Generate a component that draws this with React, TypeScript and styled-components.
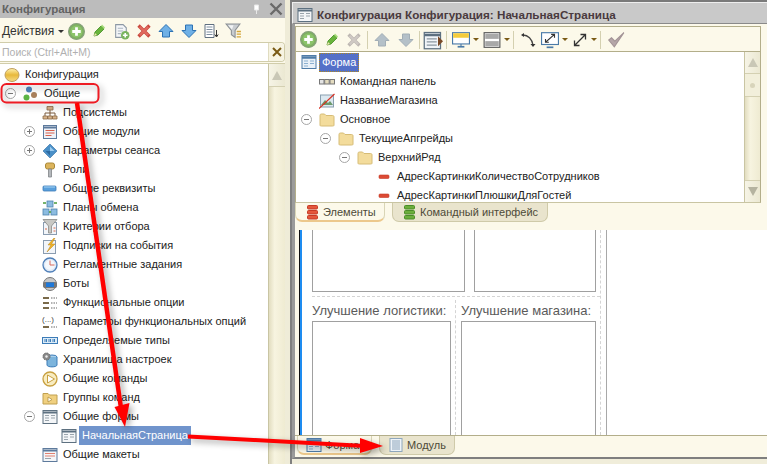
import React from "react";
import styled, { createGlobalStyle } from "styled-components";

const Global = createGlobalStyle`
  html, body { margin: 0; padding: 0; overflow: hidden; background: #fff; }
  body { font-family: "Liberation Sans", Arial, sans-serif; font-size: 12px; color: #222; }
`;

const Page = styled.div`
  position: relative; width: 767px; height: 464px; display: flex; overflow: hidden; background: #f0edda;
`;
const LeftPanel = styled.div`
  width: 285px; height: 464px; display: flex; flex-direction: column; background: #fcf9ea; flex: none;
`;
const PanelTitle = styled.div`
  height: 18px; flex: none; background: #bcbcbc; display: flex; align-items: center; padding-left: 2px;
  font-weight: bold; font-size: 11.5px; color: #636363;
`;
const TitleSpacer = styled.div`flex: 1;`;
const TitleButton = styled.span`
  width: 19px; height: 18px; display: flex; align-items: center; justify-content: center;
`;
const PanelToolbar = styled.div`
  height: 25px; flex: none; display: flex; align-items: center; padding: 1px 0 0 2px; box-sizing: border-box; font-size: 12px; color: #333;
`;
const ActionsMenu = styled.span`display: flex; align-items: center; width: 63px; gap: 4px; letter-spacing: -0.05px;`;
const Caret = styled.span`
  width: 0; height: 0; border-left: 3px solid transparent; border-right: 3px solid transparent;
  border-top: 3px solid ${p => p.$color || "#333"}; flex: none;
`;
const ToolBtn = styled.span`
  width: ${p => p.$w || 22.5}px; height: 22px; display: flex; align-items: center; justify-content: center; gap: 3px; flex: none;
`;
const SearchBox = styled.div`
  height: 18px; flex: none; margin-bottom: 1px; display: flex; align-items: stretch; background: #fff;
  border: 1px solid #d1cdaa; border-left: none; border-radius: 0 4px 4px 0; box-sizing: content-box;
  margin-top: -1px;
`;
const SearchText = styled.span`
  flex: 1; color: #b0b0b0; font-size: 10.5px; line-height: 18px; padding-left: 2px;
`;
const SearchClear = styled.span`
  width: 15px; background: #f7f4e2; border-left: 1px solid #e0dcc0; display: flex; align-items: center; justify-content: center;
  border-radius: 0 4px 4px 0;
`;
const TreeArea = styled.div`
  flex: 1; min-height: 0; display: flex; background: #fff; border-top: 1px solid #d1cdaa;
`;
const Tree = styled.div`
  flex: 1; min-width: 0; overflow: hidden; background: #fff; padding-top: ${p => p.$top || 0}px;
`;
const Row = styled.div`
  height: ${p => p.$h || 19}px; display: flex; align-items: center; padding-left: ${p => p.$indent}px; white-space: nowrap;
  font-size: 11px; color: #222;
`;
const Slot = styled.span`width: 19px; height: 16px; flex: none; display: flex; align-items: center; justify-content: flex-start;`;
const Expander = styled.span`
  width: 9px; height: 9px; border: 1px solid #a6a6a6; border-radius: 50%; position: relative; display: block;
  background: #fff; margin-left: 1px;
  &::before { content: ""; position: absolute; left: 2px; right: 2px; top: 4px; height: 1px; background: #777; }
  &::after { content: ""; position: absolute; top: 2px; bottom: 2px; left: 4px; width: 1px; background: #777; display: ${p => p.$plus ? "block" : "none"}; }
`;
const Label = styled.span`
  margin-left: 2px; padding: 0 3px; line-height: 19px; height: 19px;
  background: ${p => p.$sel === "blue" ? "#7094cc" : p.$sel === "focus" ? "#5470c8" : "transparent"};
  color: ${p => p.$sel ? "#fff" : "#222"};
  outline: ${p => p.$sel === "focus" ? "1px dotted #b08a20" : "none"}; outline-offset: -1px;
`;
const Scrollbar = styled.div`
  width: ${p => p.$w || 17}px; flex: none; display: flex; flex-direction: column;
  background: linear-gradient(90deg, #e2ddc0, #f7f4e0 35%, #efebd2);
  border-left: 1px solid #c9c5a3; box-sizing: border-box;
`;
const ScrollEnd = styled.div`
  height: ${p => p.$h || 21}px; flex: none; display: flex; align-items: center; justify-content: center;
  background: linear-gradient(90deg, #f6f4e6, #ebe8d2);
  border-bottom: ${p => p.$bottom ? "none" : "1px solid #d4d0b2"};
  border-top: ${p => p.$bottom ? "1px solid #d4d0b2" : "none"};
`;
const ScrollThumb = styled.div`
  height: 22px; flex: none; background: #f2efdb; border-bottom: 1px solid #d4d0b2; display: flex; align-items: center; justify-content: center;
  &::after { content: ""; width: 5px; height: 5px; border-radius: 50%; background: #d8d4bb; }
`;
const ScrollFill = styled.div`flex: 1;`;
const Tri = styled.span`
  width: 0; height: 0; border-left: 5px solid transparent; border-right: 5px solid transparent;
  ${p => p.$down ? "border-top: 9px solid #b5b3a0;" : "border-bottom: 9px solid #c9c7b6;"}
`;

const Gutter = styled.div`width: 5px; flex: none; background: #efecd8;`;

const Window = styled.div`
  flex: 1; min-width: 0; height: 464px; display: flex; flex-direction: column;
  border-left: 2px solid #808080; border-top: 2px solid #7a7a7a; box-sizing: border-box; background: #f0edda;
`;
const WinTitle = styled.div`
  height: 22px; flex: none; background: #c9c9c9; border-top: 1px solid #eee; border-left: 1px solid #eee;
  border-bottom: 1px solid #8a8a8a; display: flex; align-items: center; padding: 3px 0 0 4px; gap: 4px; box-sizing: border-box;
  font-weight: bold; font-size: 11.7px; color: #4a3a3e;
`;
const WinBody = styled.div`
  flex: 1; min-height: 0; display: flex; flex-direction: column; background: #fcf9ea;
  border-left: 3px solid #9b9b9b; border-bottom: 2px solid #7f7f7f; margin-bottom: 5px;
`;
const EditorTop = styled.div`
  height: 206px; flex: none; padding-top: 2px; padding-right: 6px; box-sizing: border-box; display: flex; flex-direction: column;
`;
const EditorFrame = styled.div`
  height: 177px; flex: none; display: flex; flex-direction: column; border: 1px solid #b3ae8a; border-bottom: 1px solid #c9c5a3;
  box-sizing: border-box; background: #fcf9ea;
`;
const EditorToolbar = styled.div`
  height: 25px; flex: none; display: flex; align-items: center; border-bottom: 1px solid #b3ae8a; padding: 1px 0 0 1px; box-sizing: border-box;
`;
const ToolSep = styled.span`width: 1px; height: 18px; background: #d4d0b0; flex: none; margin: 0 ${p => p.$m ?? 2}px;`;
const EditorTreeRow = styled.div`flex: 1; min-height: 0; display: flex; background: #fff;`;
const TabRow = styled.div`
  height: 20px; flex: none; display: flex; align-items: flex-start; gap: 7px;
`;
const Tab = styled.div`
  height: 19px; display: flex; align-items: center; gap: ${p => p.$gap ?? 2}px; padding: 0 0 0 ${p => p.$pl ?? 9}px; box-sizing: border-box; width: ${p => p.$w}px;
  font-size: 11px; color: #4d4a38; white-space: nowrap;
  border: 1px solid ${p => p.$active ? "#d9d5b6" : "#cfcaa9"}; border-top: none; border-radius: 0 0 7px 7px;
  background: ${p => p.$active ? "#fcf9ea" : "#e9e4cd"};
  ${p => p.$active ? "border-bottom: 2px solid #ecc88c;" : ""}
`;
const Canvas = styled.div`
  flex: 1; min-height: 0; margin-left: 4px; background: #fff; display: flex; overflow: hidden;
  border-left: 1px solid #111;
`;
const BlueEdge = styled.div`width: 2px; flex: none; background: #1e8cf0;`;
const FormArea = styled.div`
  width: 305px; flex: none; padding-left: 10px; box-sizing: border-box; border-right: 1px solid #a8a8a8;
`;
const FormInner = styled.div`
  width: 289px; height: 100%; box-sizing: border-box; border-right: 1px dashed #d4d4d4; display: flex; flex-direction: column;
`;
const TopBoxes = styled.div`height: 62px; flex: none; display: flex; gap: 9px;`;
const PicBox = styled.div`
  box-sizing: border-box; width: ${p => p.$w}px; border: 1px solid #a0a0a0;
  ${p => p.$top ? "border-top: none; height: 100%;" : "border-bottom: none; flex: 1; min-height: 0;"}
`;
const HDash = styled.div`
  width: 288px; flex: none; border-top: 1px dashed #d4d4d4; margin-top: 4px; box-sizing: border-box;
`;
const BottomRow = styled.div`flex: 1; min-height: 0; display: flex; padding-top: 3px;`;
const Col = styled.div`
  display: flex; flex-direction: column; width: ${p => p.$w}px; flex: none; box-sizing: border-box;
  ${p => p.$divider ? "border-right: 1px dashed #d4d4d4; margin-right: 5px;" : ""}
`;
const FieldLabel = styled.div`
  height: 21px; flex: none; line-height: 21px; font-size: 13px; color: #5a5a5a; white-space: nowrap;
`;
const ModeTabs = styled.div`
  height: 21px; flex: none; border-top: 1px solid #b3ae8a; display: flex; gap: 7px; padding-left: 2px; box-sizing: content-box;
`;
const Overlay = styled.svg`
  position: absolute; left: 0; top: 0; width: 767px; height: 464px; pointer-events: none; overflow: visible;
`;

/* ---- icons ---- */
const I = ({ children, s = 16 }: any) => <svg width={s} height={s} viewBox="0 0 16 16" style={{ flex: "none", display: "block" }}>{children}</svg>;

const Plus = () => <I s={17}><circle cx="8" cy="8" r="7.5" fill="#7faf62" stroke="#87a07c" /><circle cx="8" cy="8" r="5.6" fill="#8cc46a" /><path d="M8 4v8M4 8h8" stroke="#fff" strokeWidth="2.6" /></I>;
const Pencil = () => <I><path d="M3 13l1-4 6-6 3 3-6 6z" fill="#69b43c" stroke="#3f8a1f" strokeWidth=".8" /><path d="M3 13l1-3 2 2z" fill="#f0e6b0" /><path d="M10 3l3 3 1-1.500-3-3z" fill="#a8dc7c" /></I>;
const DocPlus = () => <I s={17}><path d="M2.500 1.500h7l3 3v9h-10z" fill="#f4f6f8" stroke="#8c98a4" /><path d="M4.500 5h5M4.500 7.500h5M4.500 10h3" stroke="#a9b4c0" /><circle cx="11.500" cy="11.500" r="4" fill="#79b35e" /><path d="M11.500 9.300v4.400M9.300 11.500h4.400" stroke="#fff" strokeWidth="1.500" /></I>;
const XIcon = ({ c = "#e06a5e", d = "#c9483e" }: any) => <I><path d="M3 3l10 10M13 3L3 13" stroke={d} strokeWidth="4" strokeLinecap="square" transform="translate(8 8) scale(.85) translate(-8 -8)" /><path d="M3 3l10 10M13 3L3 13" stroke={c} strokeWidth="2.500" transform="translate(8 8) scale(.85) translate(-8 -8)" /></I>;
const Up = ({ c = "#6fb0e6", e = "#2c72b4" }: any) => <I><path d="M8 1.500L15 8.500h-3.500V14h-7V8.500H1z" fill={c} stroke={e} /></I>;
const Down = ({ c = "#6fb0e6", e = "#2c72b4" }: any) => <I><path d="M8 14.500L15 7.500h-3.500V2h-7v5.500H1z" fill={c} stroke={e} /></I>;
const ListDown = () => <I><path d="M2 1.500h9v13H2z" fill="#fff" stroke="#5f6f80" /><path d="M3.500 4h6M3.500 6.500h6M3.500 9h6M3.500 11.500h6" stroke="#7f8fa0" /><path d="M13.500 7v6.500M11.800 11.500l1.700 2.500 1.700-2.500" stroke="#333" fill="none" /></I>;
const Funnel = () => <I s={17}><path d="M1 1h13L9.500 7v6.500L6 11V7z" fill="#c8ccd0" stroke="#8a8f94" /><path d="M3 2h5L6.500 6z" fill="#f2f4f6" /><path d="M11 8h4M11 10.500h4M11 13h4" stroke="#d4a63a" strokeWidth="1.200" /></I>;
const Pin = () => <svg width="7" height="11" viewBox="0 0 7 11"><path d="M1.500 1h4v5h-4zM3.500 6v4" fill="#fff" stroke="#e8e8e8" /></svg>;
const CloseBig = () => <svg width="14" height="14" viewBox="0 0 14 14"><path d="M1.500 1.500l11 11M12.500 1.500l-11 11" stroke="#6a6a6a" strokeWidth="2.400" /></svg>;
const SmallX = () => <svg width="10" height="10" viewBox="0 0 10 10"><path d="M1 1l8 8M9 1L1 9" stroke="#7a5a14" strokeWidth="2" /></svg>;

const ConfigBall = () => <I><defs><linearGradient id="cb" x1="0" y1="0" x2="0" y2="1"><stop offset="0" stopColor="#fff2b0" /><stop offset=".5" stopColor="#e8b83a" /><stop offset="1" stopColor="#f6dc88" /></linearGradient></defs><ellipse cx="8" cy="8" rx="7" ry="6.500" fill="url(#cb)" stroke="#c0a060" /></I>;
const Common = () => <I><circle cx="6" cy="3.500" r="3" fill="#4f84bc" /><circle cx="3.500" cy="11.500" r="3" fill="#5cb544" /><circle cx="11" cy="9" r="3" fill="#a9805c" /></I>;
const Subsys = () => <I><path d="M8 5v3M3 11V8h10v3M8 8v3" stroke="#7a5a3c" fill="none" /><path d="M5 1.500h6v3.500H5zM1 11h4.500v3H1zM5.800 11h4.400v3H5.800zM10.500 11H15v3h-4.500z" fill="#d8b48c" stroke="#8c6a48" strokeWidth=".8" /></I>;
const Module = () => <I><rect x="1.500" y="1.500" width="13" height="13" fill="#eef2f8" stroke="#5d7a9c" /><path d="M1.500 3.500h13" stroke="#5d7a9c" strokeWidth="2" /><path d="M3.500 6.500h9M3.500 9h9M3.500 11.500h6" stroke="#d8604c" /></I>;
const Diamond = () => <I><path d="M8 1l7 7-7 7-7-7z" fill="#4a90c8" stroke="#2f6ca0" strokeWidth=".6" /><path d="M8 3.500L12.500 8 8 8z" fill="#9ccbee" /><path d="M8 12.500L3.500 8 8 8z" fill="#2c6aa2" /></I>;
const Key = () => <I><rect x="3.500" y="1" width="9" height="6" rx="2" fill="#dcb45c" stroke="#a98838" /><path d="M6.500 7h3v8h-3z" fill="#b4b8bc" stroke="#808488" strokeWidth=".8" /></I>;
const Attr = () => <I><rect x="1" y="5" width="13" height="5" rx="1" fill="#5aa0dc" stroke="#3c7cb8" strokeWidth=".8" /><path d="M2 6h11" stroke="#a8d4f4" /></I>;
const Exchange = () => <I><rect x="5" y="1" width="6" height="6" fill="#8cbce0" stroke="#4f83ad" strokeWidth=".8" /><rect x="1" y="9" width="6" height="6" fill="#8cbce0" stroke="#4f83ad" strokeWidth=".8" /><rect x="9" y="9" width="6" height="6" fill="#8cbce0" stroke="#4f83ad" strokeWidth=".8" /><path d="M1 3h3M12 3h3M7 12h2" stroke="#4a9a3a" strokeWidth="1.400" /></I>;
const Criteria = () => <I><rect x="1.500" y="3.500" width="13" height="12" fill="#f2f5f9" stroke="#8a9cb0" /><path d="M1 .5h14L9.500 7v7h-3V7z" fill="#c8c8c4" stroke="#8a8a86" strokeWidth=".8" /><path d="M3 10h2M11.500 9h2M11.500 12h2" stroke="#d86a4c" /></I>;
const Bolt = () => <I><rect x="1.500" y="2.500" width="12" height="13" fill="#f2f5f9" stroke="#8a9cb0" /><path d="M12 0L6 7h3l-4 7 8-8H9.500l3.500-6z" fill="#f0b428" stroke="#b8841c" strokeWidth=".5" /></I>;
const Clock = () => <I><circle cx="8" cy="8" r="7" fill="#dce8f6" stroke="#4f7fb8" strokeWidth="1.300" /><circle cx="8" cy="8" r="5" fill="#f4f8fc" /><path d="M8 3.500V8h4.500" stroke="#d86a5c" fill="none" /></I>;
const Bot = () => <I><circle cx="8" cy="8" r="6.500" fill="#c8c8c8" stroke="#777" /><rect x="1" y="6" width="14" height="6" rx="2" fill="#777" /><rect x="4" y="6.500" width="8" height="4.500" fill="#1e78d8" /></I>;
const Options = () => <I><path d="M1 3h6M1 8h6M1 13h6" stroke="#7a6a4a" strokeWidth="2" /><path d="M9 3h6M9 8h6M9 13h6" stroke="#9a9a9a" strokeWidth="1.500" strokeDasharray="1.500 1" /></I>;
const OptParams = () => <svg width="16" height="16" viewBox="0 0 16 16" style={{ flex: "none" }}><text x="0" y="8" fontSize="8" fontFamily="Liberation Sans" fill="#444">(...)</text><path d="M1 13h6" stroke="#7a6a4a" strokeWidth="2" /><path d="M9 13h6" stroke="#9a9a9a" strokeWidth="1.500" strokeDasharray="1.500 1" /></svg>;
const Types = () => <I><rect x="0.500" y="4.500" width="15" height="6" fill="#dcecf8" stroke="#3c7cb8" /><path d="M3 6v3M4.500 6v3M7 6v3M8.500 6v3M11 6v3M12.500 6v3" stroke="#3c7cb8" /></I>;
const Storage = () => <I><ellipse cx="10" cy="5" rx="5" ry="2" fill="#a8d0ec" stroke="#3c7cb8" /><path d="M5 5v8c0 2.500 10 2.500 10 0V5" fill="#7cb4dc" stroke="#3c7cb8" /><circle cx="4.500" cy="4.500" r="3.500" fill="#8a8a8a" stroke="#666" strokeDasharray="1.500 .8" /><circle cx="4.500" cy="4.500" r="1.200" fill="#eee" /></I>;
const PlayCircle = () => <I><circle cx="8" cy="8" r="7" fill="#f8ecc0" stroke="#c8a040" strokeWidth="1.300" /><path d="M5.500 4l7 4-7 4z" fill="#fff" stroke="#c8a040" /></I>;
const PlayFolder = () => <I><path d="M1 3.500h5l1.500 1.500h7.500v9H1z" fill="#f0d080" stroke="#c0a050" /><path d="M6 7l4 2.500L6 12z" fill="#fff" stroke="#b09040" strokeWidth=".8" /></I>;
const FormDoc = () => <I><rect x="1" y="1.500" width="14" height="13" fill="#f4f6f8" stroke="#5d7080" /><path d="M1 3.500h14" stroke="#5d7080" strokeWidth="2" /><path d="M3 6.500h4M3 9h4M3 11.500h4M9 6.500h4M9 9h4" stroke="#9aa4ac" /></I>;
const ModuleDoc = () => <I><rect x="2" y="1.500" width="12" height="13" fill="#eef3f8" stroke="#8ea6bc" /><path d="M4 4h8M4 6h8M4 8h8M4 10h8M4 12h8" stroke="#8ea6bc" /></I>;
const Layouts = () => <I><rect x="1" y="1.500" width="14" height="13" fill="#f4f6f8" stroke="#5d7a9c" /><path d="M1 3.500h14" stroke="#5d7a9c" strokeWidth="2" /><path d="M3 6.500h10M3 9h10" stroke="#e08070" /><path d="M3 11.500h6" stroke="#9aa4ac" /></I>;
const FormMain = () => <I><rect x="1" y="1.500" width="14" height="13" fill="#e8f0f8" stroke="#4f7ca8" /><path d="M1 3.500h14" stroke="#4f7ca8" strokeWidth="2.500" /><path d="M3 7h4M3 9.500h4M3 12h4M9 7h4M9 9.500h4" stroke="#8cb0d0" /></I>;
const CmdPanel = () => <I><rect x="0.500" y="5.500" width="4.500" height="4.500" fill="#e4e4e4" stroke="#777" /><rect x="5.700" y="5.500" width="4.500" height="4.500" fill="#e4dcc0" stroke="#777" /><rect x="11" y="5.500" width="4.500" height="4.500" fill="#e4dcc0" stroke="#777" /></I>;
const NoPic = () => <I><rect x="1.500" y="2" width="13" height="12" fill="#dce8f0" stroke="#8aa0b0" /><path d="M2 12l4-5 3 3 2-2 3 4z" fill="#6c9a6c" /><path d="M0 15.500L15.500 1" stroke="#d83020" strokeWidth="1.100" /></I>;
const Folder = () => <I><path d="M1 3.500c0-1 .5-1.500 1.500-1.500h3l1.500 1.500h6.500c1 0 1.500.5 1.500 1.500v8c0 1-.5 1-1.500 1h-11C1.500 14 1 14 1 13z" fill="#f3dc9c" stroke="#d6bc76" /></I>;
const RedDash = () => <I><rect x="3" y="6" width="10" height="3.500" rx="1" fill="#dc4a34" stroke="#c63a26" strokeWidth=".6" /></I>;
const Stack = ({ c, e }: any) => <I><rect x="2.500" y="1.500" width="10" height="3.500" rx="1" fill={c} stroke={e} /><rect x="2.500" y="6.500" width="10" height="3.500" rx="1" fill={c} stroke={e} /><rect x="2.500" y="11.500" width="10" height="3.500" rx="1" fill={c} stroke={e} /></I>;
const RunForm = () => <I s={20}><rect x="1" y="2" width="13" height="13" fill="#f0f4f8" stroke="#5d7080" /><path d="M1 4h13" stroke="#5d7080" strokeWidth="2" /><path d="M3 7h8M3 9.500h8M3 12h8" stroke="#8a96a0" /><path d="M12 5l4 4-4 4z" fill="#7a4a28" /></I>;
const Display = () => <I s={18}><rect x="0.500" y="1.500" width="15" height="10" fill="#fff" stroke="#4a7aa8" /><rect x="1" y="2" width="14" height="4" fill="#f4cc3c" /><path d="M5 14h6" stroke="#4a7aa8" strokeWidth="1.500" /><path d="M8 11.500V14" stroke="#4a7aa8" /></I>;
const Split = () => <I s={18}><rect x="1" y="1.500" width="14" height="13" fill="#fff" stroke="#555" /><rect x="2" y="2.500" width="12" height="4.500" fill="#a8a8a8" /><rect x="2" y="9" width="12" height="4.500" fill="#a8a8a8" /></I>;
const Swap = () => <I><path d="M3 3c5 0 9 4 10 10" fill="none" stroke="#444" strokeWidth="1.300" /><path d="M1 3l3-2v4zM13 15l-2.500-3h5z" fill="#333" /></I>;
const Resize = () => <I s={18}><rect x="0.500" y="1.500" width="15" height="10.500" fill="#fff" stroke="#4a7aa8" /><path d="M5 14.500h6" stroke="#4a7aa8" strokeWidth="1.500" /><path d="M4 10l8-7M9 3h3v3M7 10H4V7" stroke="#333" fill="none" /></I>;
const Expand = () => <I><path d="M2.500 13.500l11-11M8.500 2.500h5v5M7.500 13.500h-5v-5" stroke="#333" strokeWidth="1.300" fill="none" /></I>;
const Check = () => <I s={18}><path d="M1.500 8l5 6L15 1.500 7 9 4 6z" fill="#b5a6a8" stroke="#a39496" /></I>;

const leftRows: any[] = [
  { indent: 4, icon: <ConfigBall />, text: "Конфигурация", noSlot: true },
  { indent: 4, icon: <Common />, text: "Общие", exp: "minus" },
  { indent: 23, icon: <Subsys />, text: "Подсистемы" },
  { indent: 23, icon: <Module />, text: "Общие модули", exp: "plus" },
  { indent: 23, icon: <Diamond />, text: "Параметры сеанса", exp: "plus" },
  { indent: 23, icon: <Key />, text: "Роли" },
  { indent: 23, icon: <Attr />, text: "Общие реквизиты" },
  { indent: 23, icon: <Exchange />, text: "Планы обмена" },
  { indent: 23, icon: <Criteria />, text: "Критерии отбора" },
  { indent: 23, icon: <Bolt />, text: "Подписки на события" },
  { indent: 23, icon: <Clock />, text: "Регламентные задания" },
  { indent: 23, icon: <Bot />, text: "Боты" },
  { indent: 23, icon: <Options />, text: "Функциональные опции" },
  { indent: 23, icon: <OptParams />, text: "Параметры функциональных опций" },
  { indent: 23, icon: <Types />, text: "Определяемые типы" },
  { indent: 23, icon: <Storage />, text: "Хранилища настроек" },
  { indent: 23, icon: <PlayCircle />, text: "Общие команды" },
  { indent: 23, icon: <PlayFolder />, text: "Группы команд" },
  { indent: 23, icon: <FormDoc />, text: "Общие формы", exp: "minus" },
  { indent: 42, icon: <FormDoc />, text: "НачальнаяСтраница", sel: "blue" },
  { indent: 23, icon: <Layouts />, text: "Общие макеты" },
];
const rightRows: any[] = [
  { indent: 5, icon: <FormMain />, text: "Форма", noSlot: true, sel: "focus", h: 20 },
  { indent: 4, icon: <CmdPanel />, text: "Командная панель" },
  { indent: 4, icon: <NoPic />, text: "НазваниеМагазина" },
  { indent: 4, icon: <Folder />, text: "Основное", exp: "minus" },
  { indent: 23, icon: <Folder />, text: "ТекущиеАпгрейды", exp: "minus" },
  { indent: 42, icon: <Folder />, text: "ВерхнийРяд", exp: "minus" },
  { indent: 61, icon: <RedDash />, text: "АдресКартинкиКоличествоСотрудников" },
  { indent: 61, icon: <RedDash />, text: "АдресКартинкиПлюшкиДляГостей" },
];

const TreeRows = ({ rows }: { rows: any[] }) => (
  <>
    {rows.map((r, i) => (
      <Row key={i} $indent={r.indent} $h={r.h}>
        {!r.noSlot && <Slot>{r.exp && <Expander $plus={r.exp === "plus"} />}</Slot>}
        {r.icon}
        <Label $sel={r.sel}>{r.text}</Label>
      </Row>
    ))}
  </>
);

export default function App() {
  return (
    <Page>
      <Global />
      <LeftPanel>
        <PanelTitle>
          Конфигурация
          <TitleSpacer />
          <TitleButton><Pin /></TitleButton>
          <TitleButton><CloseBig /></TitleButton>
        </PanelTitle>
        <PanelToolbar>
          <ActionsMenu>Действия <Caret /></ActionsMenu>
          <ToolBtn><Plus /></ToolBtn>
          <ToolBtn><Pencil /></ToolBtn>
          <ToolBtn><DocPlus /></ToolBtn>
          <ToolBtn><XIcon /></ToolBtn>
          <ToolBtn><Up /></ToolBtn>
          <ToolBtn><Down /></ToolBtn>
          <ToolBtn><ListDown /></ToolBtn>
          <ToolBtn><Funnel /></ToolBtn>
        </PanelToolbar>
        <SearchBox>
          <SearchText>Поиск (Ctrl+Alt+M)</SearchText>
          <SearchClear><SmallX /></SearchClear>
        </SearchBox>
        <TreeArea>
          <Tree $top={1}><TreeRows rows={leftRows} /></Tree>
          <Scrollbar>
            <ScrollEnd $h={22}><Tri /></ScrollEnd>
            <ScrollFill />
          </Scrollbar>
        </TreeArea>
      </LeftPanel>
      <Gutter />
      <Window>
        <WinTitle><FormDoc />Конфигурация Конфигурация: НачальнаяСтраница</WinTitle>
        <WinBody>
          <EditorTop>
            <EditorFrame>
              <EditorToolbar>
                <ToolBtn $w={23}><Plus /></ToolBtn>
                <ToolBtn $w={23}><Pencil /></ToolBtn>
                <ToolBtn $w={22}><XIcon c="#cfc9c4" d="#bdb7b2" /></ToolBtn>
                <ToolSep $m={2} />
                <ToolBtn $w={24}><Up c="#b4c0c8" e="#a2aeb6" /></ToolBtn>
                <ToolBtn $w={23}><Down c="#b4c0c8" e="#a2aeb6" /></ToolBtn>
                <ToolSep $m={2} />
                <ToolBtn $w={21}><RunForm /></ToolBtn>
                <ToolSep $m={3} />
                <ToolBtn $w={31}><Display /><Caret $color="#7a5a14" /></ToolBtn>
                <ToolBtn $w={30}><Split /><Caret $color="#7a5a14" /></ToolBtn>
                <ToolSep $m={2} />
                <ToolBtn $w={23}><Swap /></ToolBtn>
                <ToolBtn $w={31}><Resize /><Caret $color="#7a5a14" /></ToolBtn>
                <ToolBtn $w={29}><Expand /><Caret $color="#7a5a14" /></ToolBtn>
                <ToolSep $m={1} />
                <ToolBtn $w={28}><Check /></ToolBtn>
              </EditorToolbar>
              <EditorTreeRow>
                <Tree><TreeRows rows={rightRows} /></Tree>
                <Scrollbar $w={16}>
                  <ScrollEnd $h={21}><Tri /></ScrollEnd>
                  <ScrollThumb />
                  <ScrollFill />
                  <ScrollEnd $h={21} $bottom><Tri $down /></ScrollEnd>
                </Scrollbar>
              </EditorTreeRow>
            </EditorFrame>
            <TabRow>
              <Tab $active $w={90}><Stack c="#e4573c" e="#c63a26" />Элементы</Tab>
              <Tab $w={156}><Stack c="#6cae3c" e="#4a8c28" />Командный интерфейс</Tab>
            </TabRow>
          </EditorTop>
          <Canvas>
            <BlueEdge />
            <FormArea>
              <FormInner>
                <TopBoxes>
                  <PicBox $top $w={153} />
                  <PicBox $top $w={122} />
                </TopBoxes>
                <HDash />
                <BottomRow>
                  <Col $w={144} $divider>
                    <FieldLabel>Улучшение логистики:</FieldLabel>
                    <PicBox $w={139} />
                  </Col>
                  <Col $w={135}>
                    <FieldLabel>Улучшение магазина:</FieldLabel>
                    <PicBox $w={135} />
                  </Col>
                </BottomRow>
              </FormInner>
            </FormArea>
          </Canvas>
          <ModeTabs>
            <Tab $active $w={75} $pl={8} $gap={3}><FormMain />Форма</Tab>
            <Tab $w={76} $pl={8} $gap={3}><ModuleDoc />Модуль</Tab>
          </ModeTabs>
        </WinBody>
      </Window>
      <Overlay viewBox="0 0 767 464">
        <g style={{ filter: "drop-shadow(3px 3px 3px rgba(0,0,0,.35))" }}>
          <rect x="1.500" y="84" width="97" height="18.500" rx="5" fill="none" stroke="#ee1c24" strokeWidth="2" />
          <path d="M77 103L121 408" stroke="#f00" strokeWidth="4.500" />
          <path d="M125 427L114.500 407L129.500 403z" fill="#f00" />
          <path d="M188 436.500L365 446" stroke="#f00" strokeWidth="4" />
          <path d="M383 446L360 438L360 453z" fill="#f00" />
        </g>
      </Overlay>
    </Page>
  );
}
